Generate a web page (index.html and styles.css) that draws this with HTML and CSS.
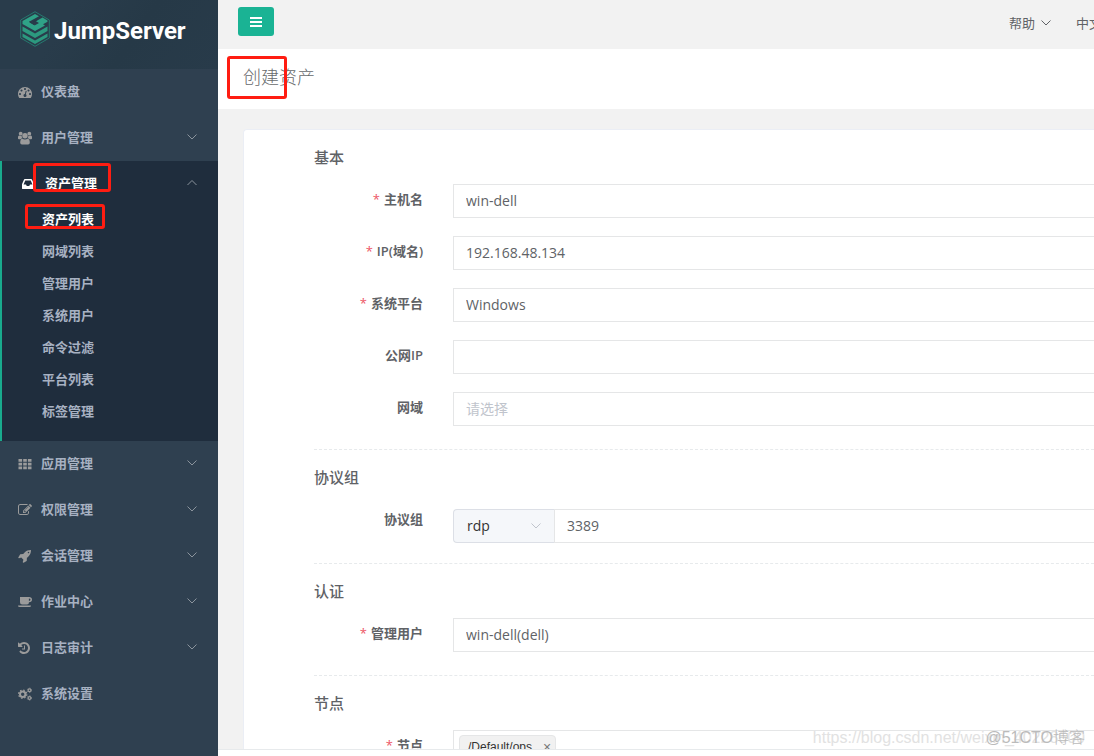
FILE: index.html
```html
<!DOCTYPE html>
<html lang="zh-CN">
<head>
<meta charset="utf-8">
<title>创建资产 - JumpServer</title>
<link rel="stylesheet" href="styles.css">
</head>
<body>
<svg class="sprite" aria-hidden="true">
  <symbol id="down" viewBox="0 0 12 12"><path d="M1.500 3.500 6 8l4.500-4.500" fill="none" stroke="currentColor"/></symbol>
  <symbol id="up" viewBox="0 0 12 12"><path d="M1.500 8 6 3.500 10.500 8" fill="none" stroke="currentColor"/></symbol>
</svg>
<div class="app">
  <aside class="sidebar">
    <a class="brand" href="#">
      <svg class="brand-mark" viewBox="0 0 30 36">
        <path d="M15 .7 29.300 9v18L15 35.300.7 27V9z" fill="none" stroke="#26796f"/>
        <path d="M2.500 10 15 3l4 2.300-10 5.500 6 3.400 4-2.300-3-1.700 6.500-3.600 5 2.900v1.200l-4.500 2.500 2 1.200L15 20 2.500 13z" fill="#2fa287"/>
        <path d="m13 11 5-2.800M9.500 11l5 2.900" stroke="#263947" fill="none"/>
        <path d="m2.500 15.500 12.500 7 12.500-7v4.600l-12.500 7-12.500-7zm0 7 12.500 7 12.500-7v3.600l-12.500 7-12.500-7z" fill="#2c997f"/>
      </svg>
      <span>JumpServer</span>
    </a>
    <nav class="menu">
      <a class="item" href="#"><svg class="icon" viewBox="0 0 1792 1792"><path d="M384 1152q0-53-37.500-90.500t-90.500-37.500-90.500 37.500-37.500 90.500 37.500 90.500 90.500 37.500 90.500-37.500 37.500-90.500zm192-448q0-53-37.500-90.500t-90.500-37.500-90.500 37.500-37.500 90.500 37.500 90.500 90.500 37.500 90.500-37.500 37.500-90.500zm428 481l101-382q6-26-7.500-48.500t-38.500-29.500-48 6.500-30 39.500l-101 382q-60 5-107 43.500t-63 98.500q-20 77 20 146t117 89 146-20 89-117q16-60-6-117t-72-91zm660-33q0-53-37.500-90.500t-90.500-37.500-90.500 37.500-37.500 90.500 37.500 90.500 90.500 37.500 90.500-37.500 37.500-90.500zm-640-640q0-53-37.500-90.500t-90.500-37.500-90.500 37.500-37.500 90.500 37.500 90.500 90.500 37.500 90.500-37.500 37.500-90.500zm448 192q0-53-37.500-90.500t-90.500-37.500-90.500 37.500-37.500 90.500 37.500 90.500 90.500 37.500 90.500-37.500 37.500-90.500zm320 448q0 261-141 483-19 29-54 29h-1402q-35 0-54-29-141-221-141-483 0-182 71-348t191-286 286-191 348-71 348 71 286 191 191 286 71 348z"/></svg><span>仪表盘</span></a>
      <a class="item" href="#"><svg class="icon" viewBox="0 0 14 14"><circle cx="2.700" cy="2.700" r="1.900"/><circle cx="11.300" cy="2.700" r="1.900"/><circle cx="7" cy="4.800" r="2.700"/><path d="M0 7.500V6q0-1.500 1.200-1.500l1.500.6 1-.2q-.1 1.500.8 2.400-1.200 0-2 1H1Q0 8.300 0 7.500zM14 7.500V6q0-1.500-1.200-1.500l-1.500.6-1-.2q.1 1.500-.8 2.400 1.200 0 2 1H13q1 0 1-.8zM2.200 11.700q0-4 2.200-4Q5.500 8.500 7 8.500t2.600-.8q2.200 0 2.200 4 0 1.800-1.700 1.800H4q-1.800 0-1.800-1.800z"/></svg><span>用户管理</span><svg class="arrow"><use href="#down"/></svg></a>
      <div class="group">
        <a class="item open" href="#"><svg class="icon" viewBox="0 0 1792 1792"><path d="M1151 960h316q-1-3-2.500-8t-2.500-8l-212-496h-708l-212 496q-1 2-2.500 8t-2.500 8h316l95 192h320zm513 30v482q0 26-19 45t-45 19h-1408q-26 0-45-19t-19-45v-482q0-62 25-123l238-552q10-25 36.500-42t52.500-17h832q26 0 52.500 17t36.500 42l238 552q25 61 25 123z"/></svg><span>资产管理</span><svg class="arrow"><use href="#up"/></svg></a>
        <a class="sub current" href="#">资产列表</a>
        <a class="sub" href="#">网域列表</a>
        <a class="sub" href="#">管理用户</a>
        <a class="sub" href="#">系统用户</a>
        <a class="sub" href="#">命令过滤</a>
        <a class="sub" href="#">平台列表</a>
        <a class="sub" href="#">标签管理</a>
        <i class="mark mark-group"></i>
        <i class="mark mark-sub"></i>
      </div>
      <a class="item" href="#"><svg class="icon" viewBox="0 0 14 14"><path d="M.5 2h3.600v2.800H.5zM5.200 2h3.600v2.800H5.200zM9.900 2h3.600v2.800H9.900zM.5 5.700h3.600v2.800H.5zM5.200 5.700h3.600v2.800H5.200zM9.900 5.700h3.600v2.800H9.900zM.5 9.400h3.600v2.800H.5zM5.200 9.400h3.600v2.800H5.200zM9.900 9.400h3.600v2.800H9.900z"/></svg><span>应用管理</span><svg class="arrow"><use href="#down"/></svg></a>
      <a class="item" href="#"><svg class="icon" viewBox="0 0 1792 1792"><path d="M888 1184l116-116-152-152-116 116v56h96v96h56zm440-720q-16-16-33 1l-350 350q-17 17-1 33t33-1l350-350q17-17 1-33zm80 594v190q0 119-84.500 203.500t-203.500 84.500h-832q-119 0-203.500-84.500t-84.500-203.500v-832q0-119 84.500-203.500t203.500-84.500h832q63 0 117 25 15 7 18 23 3 17-9 29l-49 49q-14 14-32 8-23-6-45-6h-832q-66 0-113 47t-47 113v832q0 66 47 113t113 47h832q66 0 113-47t47-113v-126q0-13 9-22l64-64q15-15 35-7t20 29zm-96-738l288 288-672 672h-288v-288zm444 132l-92 92-288-288 92-92q28-28 68-28t68 28l152 152q28 28 28 68t-28 68z"/></svg><span>权限管理</span><svg class="arrow"><use href="#down"/></svg></a>
      <a class="item" href="#"><svg class="icon" viewBox="0 0 1792 1792"><path d="M1440 448q0-40-28-68t-68-28-68 28-28 68 28 68 68 28 68-28 28-68zm224-288q0 249-75.500 430.500t-253.500 360.500q-81 80-195 176l-20 379q-2 16-16 26l-384 224q-7 4-16 4-12 0-23-9l-64-64q-13-14-8-32l85-276-281-281-276 85q-3 1-9 1-14 0-23-9l-64-64q-17-19-5-39l224-384q10-14 26-16l379-20q96-114 176-195 188-187 358-258t431-71q14 0 24 9.500t10 22.500z"/></svg><span>会话管理</span><svg class="arrow"><use href="#down"/></svg></a>
      <a class="item" href="#"><svg class="icon" viewBox="0 0 14 14"><path fill-rule="evenodd" d="M2 2h9q3 0 3 2.600t-3 2.700q0 2.200-2 2.200H4.200Q2 9.500 2 7.300zM10.900 3.400v2.500q1.600 0 1.600-1.300 0-1.200-1.600-1.200zM0 10.500h13q0 1.500-1.500 1.500h-10Q0 12 0 10.500z"/></svg><span>作业中心</span><svg class="arrow"><use href="#down"/></svg></a>
      <a class="item" href="#"><svg class="icon" viewBox="128 0 1792 1792"><path d="M1664 896q0 156-61 298t-164 245-245 164-298 61q-172 0-327-72.500t-264-204.500q-7-10-6.500-22.500t8.500-20.500l137-138q10-9 25-9 16 2 23 12 73 95 179 147t225 52q104 0 198.500-40.500t163.500-109.500 109.500-163.500 40.500-198.500-40.500-198.500-109.500-163.500-163.500-109.500-198.500-40.500q-98 0-188 35.500t-160 101.500l137 138q31 30 14 69-17 40-59 40h-448q-26 0-45-19t-19-45v-448q0-42 40-59 39-17 69 14l130 129q107-101 244.500-156.500t284.500-55.500q156 0 298 61t245 164 164 245 61 298zm-640-288v448q0 14-9 23t-23 9h-320q-14 0-23-9t-9-23v-64q0-14 9-23t23-9h224v-352q0-14 9-23t23-9h64q14 0 23 9t9 23z"/></svg><span>日志审计</span><svg class="arrow"><use href="#down"/></svg></a>
      <a class="item" href="#"><svg class="icon gears" viewBox="0 0 14 14"><circle cx="4.700" cy="7.200" r="2.700" stroke-width="2"/><circle cx="4.700" cy="7.200" r="4.100" stroke-width="1.200" stroke-dasharray="1.600 1.620"/><circle cx="11.500" cy="3.300" r="1.400" stroke-width="1.200"/><circle cx="11.500" cy="3.300" r="2.200" stroke-width=".8" stroke-dasharray="1.100 1.200"/><circle cx="11.500" cy="11" r="1.400" stroke-width="1.200"/><circle cx="11.500" cy="11" r="2.200" stroke-width=".8" stroke-dasharray="1.100 1.200"/></svg><span>系统设置</span></a>
    </nav>
  </aside>
  <main class="main">
    <header class="topbar">
      <button class="toggle" type="button" aria-label="菜单"><svg viewBox="0 0 12 10"><path d="M0 0h12v2H0zM0 4h12v2H0zM0 8h12v2H0z"/></svg></button>
      <nav class="tools">
        <a href="#">帮助<svg><use href="#down"/></svg></a>
        <a href="#">中文</a>
      </nav>
    </header>
    <div class="heading"><h1>创建资产</h1><i class="mark mark-title"></i></div>
    <div class="content">
      <form class="card">
        <section>
          <h2>基本</h2>
          <div class="row"><label class="required" for="host">主机名</label><input class="field" id="host" value="win-dell"></div>
          <div class="row"><label class="required" for="ip">IP(域名)</label><input class="field" id="ip" value="192.168.48.134"></div>
          <div class="row"><label class="required" for="os">系统平台</label><select class="field" id="os"><option>Windows</option></select></div>
          <div class="row"><label for="pub">公网IP</label><input class="field" id="pub"></div>
          <div class="row"><label for="domain">网域</label><select class="field empty" id="domain"><option>请选择</option></select></div>
        </section>
        <section class="protocols">
          <h2>协议组</h2>
          <div class="row"><label for="port">协议组</label>
            <div class="combo">
              <div class="proto"><select aria-label="协议"><option>rdp</option></select><svg><use href="#down"/></svg></div>
              <input class="field" id="port" value="3389">
            </div>
          </div>
        </section>
        <section>
          <h2>认证</h2>
          <div class="row"><label class="required" for="admin">管理用户</label><select class="field" id="admin"><option>win-dell(dell)</option></select></div>
        </section>
        <section>
          <h2>节点</h2>
          <div class="row"><label class="required" for="node">节点</label>
            <div class="field tags"><span class="tag">/Default/ops<button type="button" aria-label="移除">×</button></span><input id="node"></div>
          </div>
        </section>
      </form>
    </div>
    <footer class="footer"></footer>
  </main>
  <div class="watermark url">https://blog.csdn.net/weixin_40228600</div>
  <div class="watermark site">@51CTO博客</div>
</div>
</body>
</html>
```
FILE: styles.css
```css
* { box-sizing: border-box; }
body {
  margin: 0;
  font: 13px/20px "Open Sans", "Noto Sans CJK SC", sans-serif;
  color: #606266;
}
a { color: inherit; text-decoration: none; }
h1, h2 { margin: 0; }
input, select, button { font: inherit; color: inherit; margin: 0; outline: 0; }
.sprite { display: none; }
.app { position: relative; display: flex; height: 100vh; overflow: hidden; }

.sidebar { flex: none; width: 218px; background: #2f4050; color: #a7b1c2; font-weight: 600; }
.brand {
  display: flex; align-items: center; gap: 4px; height: 69px; padding: 0 20px 11px;
  background: linear-gradient(125deg, #293c4b 0 30%, #263947 60%, #283b4a);
  color: #fff; font: bold 24px/30px Roboto, sans-serif;
}
.brand-mark { width: 30px; height: 36px; }
.brand span { padding-top: 3px; }
.item { display: flex; align-items: center; gap: 9px; height: 46px; padding: 0 20px 2px 18px; }
.icon { width: 14px; height: 14px; margin-top: 2px; fill: #9b9b9b; }
.gears { fill: none; stroke: #9b9b9b; }
.arrow { width: 12px; height: 12px; margin-left: auto; color: #8b949d; }
.group { position: relative; padding-bottom: 14px; background: #1f2d3d; border-left: 2px solid #19aa8d; }
.open { height: 42px; padding: 2px 20px 0 19px; color: #fff; gap: 10px; }
.open .icon { fill: #fff; }
.sub { display: flex; align-items: center; height: 32px; padding-left: 40px; }
.current { color: #fff; }

.mark { position: absolute; border: 3px solid #ff1d12; border-radius: 3px; pointer-events: none; }
.mark-group { left: 31px; top: 2px; width: 78px; height: 29px; }
.mark-sub { left: 23px; top: 43px; width: 80px; height: 25px; }
.mark-title { left: 9px; top: 7px; width: 60px; height: 43px; }

.main { flex: 1; min-width: 0; display: flex; flex-direction: column; background: #f2f2f2; }
.topbar { flex: none; display: flex; align-items: center; justify-content: space-between; height: 49px; padding: 0 0 6px 20px; overflow: hidden; }
.toggle { display: flex; align-items: center; justify-content: center; width: 36px; height: 29px; padding: 0; border: 0; border-radius: 3px; background: #1ab394; }
.toggle svg { width: 12px; height: 10px; fill: #fff; }
.tools { display: flex; gap: 24px; margin-right: -8px; padding-top: 2px; }
.tools a { display: flex; align-items: center; gap: 5px; }
.tools svg { width: 12px; height: 12px; }
.heading { position: relative; flex: none; height: 60px; padding: 13px 25px; background: #fff; }
h1 { font-size: 18px; line-height: 30px; font-weight: 300; color: #676a6c; }
.content { flex: 1; min-height: 0; overflow: hidden; padding: 20px 0 0 25px; }
.card { padding: 0 0 20px 70px; background: #fff; border: 1px solid #ebeef5; border-right: 0; border-radius: 4px 0 0 4px; }
section { padding-top: 17px; }
section + section { margin-top: 23px; border-top: 1px dashed #e7eaec; }
h2 { margin-bottom: 17px; font-size: 15px; line-height: 20px; font-weight: 500; }
.row { display: flex; gap: 30px; }
.row + .row { margin-top: 18px; }
label { flex: none; width: 109px; font-weight: 600; line-height: 31px; text-align: right; }
.required::before { content: "*"; margin-right: 4px; color: #ed5565; font-weight: 400; }
.field { flex: 1; min-width: 0; height: 34px; padding: 0 12px; border: 1px solid #e5e6e7; border-right: 0; border-radius: 0; background: #fff; font-size: 14px; appearance: none; }
input.field { padding-bottom: 2px; }
.empty { color: #c0c4cc; }
.combo { flex: 1; display: flex; margin-top: 5px; }
.proto { position: relative; width: 101px; }
.proto select { width: 100%; height: 34px; padding: 0 13px; border: 1px solid #dcdfe6; border-right: 0; border-radius: 4px 0 0 4px; background: #f5f7fa; color: #333; font-size: 14px; appearance: none; }
.proto svg { position: absolute; right: 12px; top: 11px; width: 12px; height: 12px; color: #c0c4cc; pointer-events: none; }
.protocols + section { margin-top: 20px; }
.tags { display: flex; padding: 4px 5px; }
.tags input { flex: 1; border: 0; }
.tag { display: flex; align-items: center; gap: 11px; height: 24px; padding: 0 4px 0 8px; border: 1px solid #e5e6e7; border-radius: 4px; background: #f1f1f1; color: #333; font-family: "Liberation Sans", sans-serif; font-size: 12px; }
.tag button { padding: 0; border: 0; background: none; color: #777; font-size: 14px; }
.footer { flex: none; height: 7px; background: #fff; border-top: 1px solid #e7eaec; }
.watermark { position: absolute; bottom: 8px; line-height: 20px; white-space: nowrap; pointer-events: none; }
.url { right: 9px; font-family: "Liberation Sans", sans-serif; font-size: 16px; color: #e2e2e2; }
.site { right: 9px; font-family: "Liberation Sans", "Noto Sans CJK SC", sans-serif; font-size: 16px; font-weight: 300; color: #bbb; }
```
